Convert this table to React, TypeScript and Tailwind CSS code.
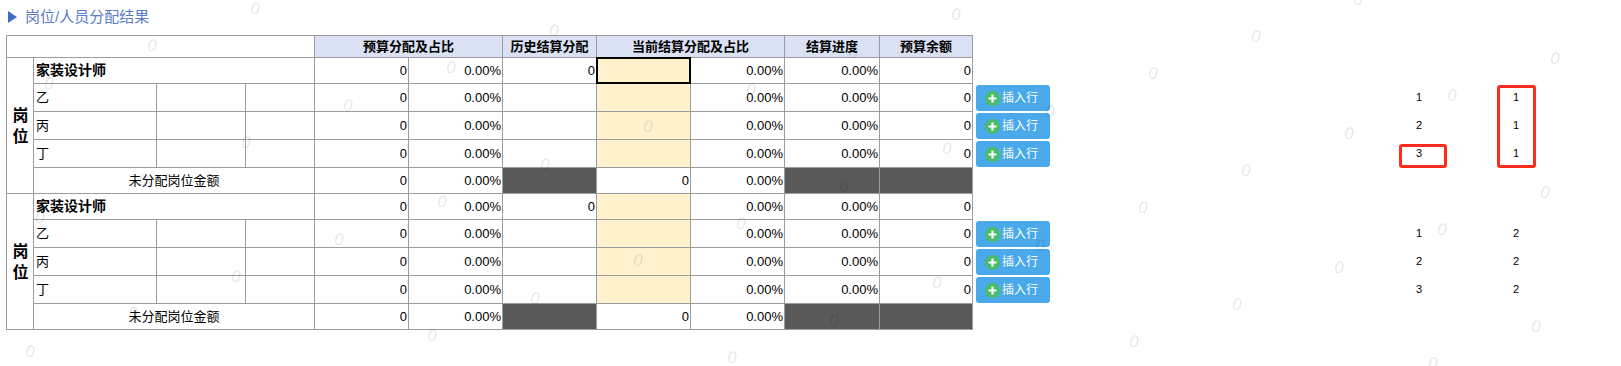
import React from "react";

const font = { fontFamily: '"Liberation Sans", "Noto Sans CJK SC", sans-serif' };

type Row = "head" | "item" | "rest";

const Num: React.FC<{ v?: string; cls?: string }> = ({ v, cls = "bg-white" }) => (
  <div className={`flex items-center justify-end pr-px text-[13px] leading-none ${cls}`}>{v}</div>
);

const Group: React.FC<{ selected?: boolean }> = ({ selected }) => {
  const rows: { kind: Row; name: string }[] = [
    { kind: "head", name: "家装设计师" },
    { kind: "item", name: "乙" },
    { kind: "item", name: "丙" },
    { kind: "item", name: "丁" },
    { kind: "rest", name: "未分配岗位金额" },
  ];
  return (
    <>
      <div className="row-span-5 bg-white flex items-center justify-center text-[16px] font-bold leading-[21px] pl-px">
        岗<br />位
      </div>
      {rows.map((r, i) => {
        if (r.kind === "head")
          return (
            <React.Fragment key={i}>
              <div className="col-span-3 bg-white flex items-center pl-[2px] text-[14px] font-bold">{r.name}</div>
              <Num v="0" />
              <Num v="0.00%" />
              <Num v="0" />
              <div className="relative bg-[#fff2cc]">
                {selected && <div className="absolute -inset-px border-2 border-black" />}
              </div>
              <Num v="0.00%" />
              <Num v="0.00%" />
              <Num v="0" />
            </React.Fragment>
          );
        if (r.kind === "item")
          return (
            <React.Fragment key={i}>
              <div className="bg-white flex items-center pl-[2px] text-[13px]">{r.name}</div>
              <div className="bg-white" />
              <div className="bg-white" />
              <Num v="0" />
              <Num v="0.00%" />
              <div className="bg-white" />
              <div className="bg-[#fff2cc]" />
              <Num v="0.00%" />
              <Num v="0.00%" />
              <Num v="0" />
            </React.Fragment>
          );
        return (
          <React.Fragment key={i}>
            <div className="col-span-3 bg-white flex items-center justify-center text-[13px]">{r.name}</div>
            <Num v="0" />
            <Num v="0.00%" />
            <div className="bg-[#595959]" />
            <Num v="0" />
            <Num v="0.00%" />
            <div className="bg-[#595959]" />
            <div className="bg-[#595959]" />
          </React.Fragment>
        );
      })}
    </>
  );
};

const InsertButton: React.FC<{ className?: string }> = ({ className = "" }) => (
  <button className={`flex h-[26px] w-[74px] items-center rounded-[3px] bg-[#4aa9ea] pl-[9px] ${className}`}>
    <span className="flex h-[15px] w-[15px] items-center justify-center rounded-full bg-[#48bc6b]">
      <svg width="11" height="11" viewBox="0 0 11 11">
        <path d="M5.5 1.5v8M1.5 5.5h8" stroke="#fff" strokeWidth="2.2" />
      </svg>
    </span>
    <span className="ml-[2px] text-[12px] leading-none text-white">插入行</span>
  </button>
);

// watermark "0" tiled on a slanted lattice
const Watermarks: React.FC = () => {
  const marks: { x: number; y: number }[] = [];
  for (let i = -25; i <= 25; i++) {
    for (let j = -4; j <= 6; j++) {
      const x = 255 - 102.9 * i - 9.5 * j;
      const y = 9 + 37.4 * i + 134 * j;
      if (x > -20 && x < 1640 && y > -15 && y < 385) marks.push({ x, y });
    }
  }
  return (
    <>
      {marks.map((m, k) => (
        <span
          key={k}
          className="pointer-events-none absolute z-10 -translate-x-1/2 -translate-y-1/2 rotate-[16deg] text-[16px] leading-none text-black/10"
          style={{ left: m.x, top: m.y, fontFamily: '"DejaVu Sans", sans-serif' }}
        >
          0
        </span>
      ))}
    </>
  );
};

const NumCol: React.FC<{ values: string[][] }> = ({ values }) => (
  <div className="flex w-[40px] flex-col text-center text-[11px] text-black">
    <div className="h-[48px]" />
    {values[0].map((v, i) => (
      <div key={i} className="flex h-[28px] items-center justify-center">{v}</div>
    ))}
    <div className="h-[52px]" />
    {values[1].map((v, i) => (
      <div key={i} className="flex h-[28px] items-center justify-center">{v}</div>
    ))}
  </div>
);

export default function App() {
  return (
    <div className="relative h-[366px] w-[1621px] overflow-hidden bg-white text-black" style={font}>
      <div className="flex h-[20px] items-center pl-[8px] mt-[7px]">
        <svg width="9" height="12" viewBox="0 0 9 12">
          <polygon points="0,0 9,6 0,12" fill="#3b6fc6" />
        </svg>
        <span className="ml-[8px] text-[15px] text-[#5a7cc9]">岗位/人员分配结果</span>
      </div>

      <div className="mt-[8px] ml-[6px] flex items-start">
        <div className="grid grid-cols-[26px_122px_88px_68px_93px_93px_93px_93px_93px_94px_92px] grid-rows-[21px_25px_27px_27px_27px_25px_25px_27px_27px_27px_25px] gap-px bg-[#9c9c9c] p-px">
          <div className="col-span-4 bg-white" />
          <div className="col-span-2 flex items-center justify-center bg-[#d9e1f2] text-[13px] font-bold">预算分配及占比</div>
          <div className="flex items-center justify-center bg-[#d9e1f2] text-[13px] font-bold">历史结算分配</div>
          <div className="col-span-2 flex items-center justify-center bg-[#d9e1f2] text-[13px] font-bold">当前结算分配及占比</div>
          <div className="flex items-center justify-center bg-[#d9e1f2] text-[13px] font-bold">结算进度</div>
          <div className="flex items-center justify-center bg-[#d9e1f2] text-[13px] font-bold">预算余额</div>
          <Group selected />
          <Group />
        </div>

        <div className="ml-[3px] flex flex-col">
          <div className="h-[50px]" />
          <InsertButton />
          <InsertButton className="mt-[2px]" />
          <InsertButton className="mt-[2px]" />
          <InsertButton className="mt-[54px]" />
          <InsertButton className="mt-[2px]" />
          <InsertButton className="mt-[2px]" />
        </div>

        <div className="ml-[349px] flex gap-[57px]">
          <NumCol values={[["1", "2", "3"], ["1", "2", "3"]]} />
          <NumCol values={[["1", "1", "1"], ["2", "2", "2"]]} />
        </div>
      </div>

      <div className="absolute left-[1399px] top-[144px] h-[24px] w-[48px] rounded-[3px] border-[3px] border-[#ff2b1c]" />
      <div className="absolute left-[1497px] top-[85px] h-[83px] w-[39px] rounded-[3px] border-[3px] border-[#ff2b1c]" />

      <Watermarks />
    </div>
  );
}
